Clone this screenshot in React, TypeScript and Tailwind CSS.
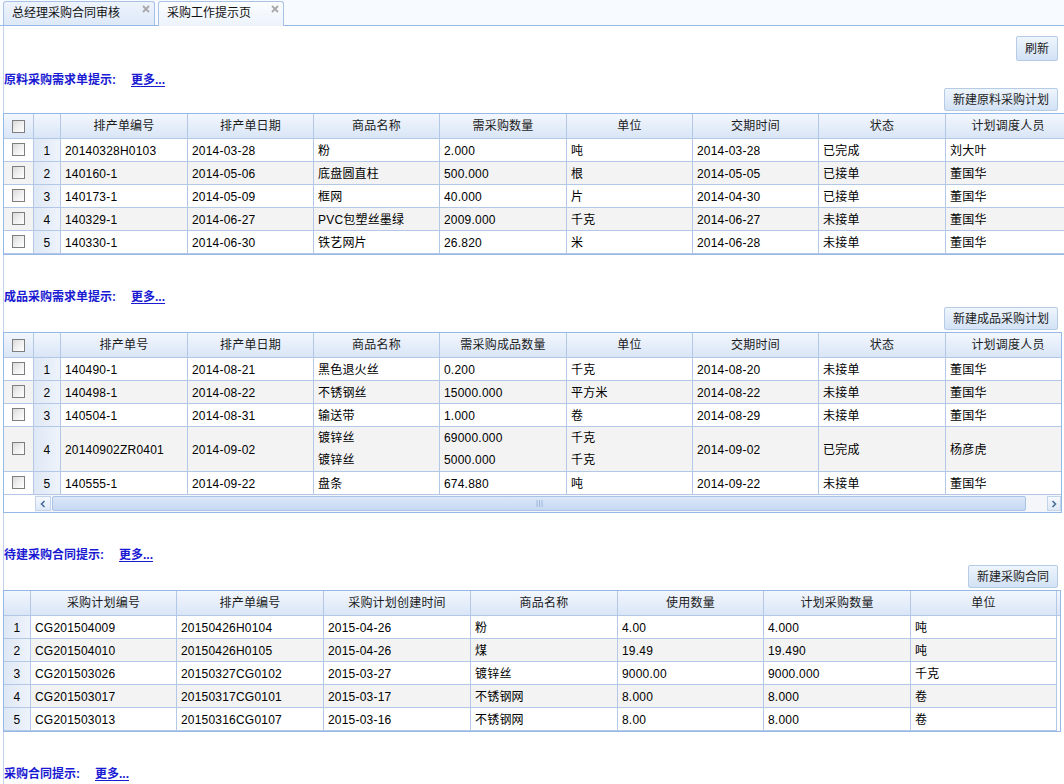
import React from "react";

type Col = { t: string; w: string };
type Cell = string | string[];
type Row = { cells: Cell[]; tall?: boolean };

const line = "border-[#b3c8e6]";

function CheckBox() {
  return (
    <span className="block w-[13px] h-[13px] border border-[#7e7e7e] bg-linear-to-br from-[#d9d9d9] via-[#f0f0f0] to-white" />
  );
}

function CloseX() {
  return (
    <svg className="absolute right-[4px] top-[3px]" width="8" height="8" viewBox="0 0 8 8">
      <path d="M1 1 L7 7 M7 1 L1 7" stroke="#a8a8a8" strokeWidth="1.8" />
    </svg>
  );
}

function Tab({ label, w, selected }: { label: string; w: string; selected?: boolean }) {
  return (
    <div
      className={
        "relative shrink-0 rounded-t-[3px] border border-b-0 border-[#a9c2e4] pl-[8px] text-[12px] leading-[22px] text-[#111] " +
        w +
        (selected
          ? " h-[25px] -mb-px bg-linear-to-b from-[#fbfdff] to-[#edf3fc]"
          : " h-[24px] bg-linear-to-b from-[#eef4fd] to-[#dde8f8]")
      }
    >
      {label}
      <CloseX />
    </div>
  );
}

function Btn({ label, h }: { label: string; h: string }) {
  return (
    <div
      className={
        "flex items-center justify-center px-[8px] rounded-[2px] border border-[#b6cbe6] bg-linear-to-b from-[#eef5fd] to-[#d2e2f5] text-[12px] text-[#222] " +
        h
      }
    >
      {label}
    </div>
  );
}

function Title({ label }: { label: string }) {
  return (
    <div className="mt-[33px] h-[18px] flex items-center text-[12px] font-bold text-[#1a1ad2] leading-[18px]">
      <span>{label}</span>
      <span className="ml-[15px] underline underline-offset-2">更多...</span>
    </div>
  );
}

function DataCell({ c, w }: { c: Cell; w: string }) {
  if (Array.isArray(c)) {
    return (
      <div className={"shrink-0 border-r " + line + " " + w + " flex flex-col justify-center pl-[4px] whitespace-nowrap overflow-hidden"}>
        {c.map((x, i) => (
          <div key={i} className="leading-[22px]">
            {x}
          </div>
        ))}
      </div>
    );
  }
  return (
    <div className={"shrink-0 border-r " + line + " " + w + " flex items-center pl-[4px] pt-px whitespace-nowrap overflow-hidden"}>
      {c}
    </div>
  );
}

function Grid({
  cols,
  rows,
  check,
  rnW,
  outerW,
  scrollbar,
}: {
  cols: Col[];
  rows: Row[];
  check: boolean;
  rnW: string;
  outerW: string;
  scrollbar?: boolean;
}) {
  return (
    <div className={"-ml-px mt-[2px] border border-[#95b8e7] overflow-hidden shrink-0 text-[12px] text-black tracking-[0.2px] " + outerW}>
      <div className={"flex h-[25px] border-b " + line + " bg-linear-to-b from-[#f3f7fe] to-[#d9e5f6] w-max min-w-full"}>
        {check && (
          <div className={"shrink-0 w-[30px] border-r " + line + " flex items-center justify-center"}>
            <CheckBox />
          </div>
        )}
        <div className={"shrink-0 border-r " + line + " " + rnW} />
        {cols.map((c, i) => (
          <div
            key={i}
            className={"shrink-0 border-r " + line + " " + c.w + " flex items-center justify-center text-[#1b1b1b] whitespace-nowrap"}
          >
            {c.t}
          </div>
        ))}
        <div className="flex-1" />
      </div>
      {rows.map((r, ri) => (
        <div
          key={ri}
          className={
            "flex border-b " + line + " w-max " + (r.tall ? "h-[45px]" : "h-[23px]") + (ri % 2 === 1 ? " bg-[#f3f3f3]" : " bg-white")
          }
        >
          {check && (
            <div className={"shrink-0 w-[30px] border-r " + line + " flex items-center justify-center pb-[2px]"}>
              <CheckBox />
            </div>
          )}
          <div className={"shrink-0 border-r " + line + " " + rnW + " flex items-center justify-center pt-px bg-linear-to-r from-[#dfe8f6] to-[#eef3fb]"}>
            {ri + 1}
          </div>
          {r.cells.map((c, ci) => (
            <DataCell key={ci} c={c} w={cols[ci].w} />
          ))}
        </div>
      ))}
      {scrollbar && (
        <div className="flex h-[17px] bg-white">
          <div className="w-[31px] shrink-0" />
          <div className="flex-1 flex items-stretch bg-[#f4f6f9] py-px">
            <div className="w-[16px] shrink-0 border border-[#c3d3ea] bg-linear-to-b from-[#f6f9fe] to-[#dde8f7] flex items-center justify-center">
              <svg width="6" height="8" viewBox="0 0 6 8">
                <path d="M4.5 1 L1.5 4 L4.5 7" fill="none" stroke="#4a6c9b" strokeWidth="1.6" />
              </svg>
            </div>
            <div className="w-[974px] shrink-0 ml-px rounded-[2px] border border-[#a9c3e6] bg-linear-to-b from-[#dbe7f8] to-[#c6d8f2] flex items-center justify-center">
              <svg width="7" height="7" viewBox="0 0 7 7">
                <path d="M1 0 V7 M3.5 0 V7 M6 0 V7" stroke="#9db6da" strokeWidth="1" />
              </svg>
            </div>
            <div className="flex-1" />
            <div className="w-[14px] shrink-0 border border-[#c3d3ea] bg-linear-to-b from-[#f6f9fe] to-[#dde8f7] flex items-center justify-center">
              <svg width="6" height="8" viewBox="0 0 6 8">
                <path d="M1.5 1 L4.5 4 L1.5 7" fill="none" stroke="#4a6c9b" strokeWidth="1.6" />
              </svg>
            </div>
          </div>
        </div>
      )}
    </div>
  );
}

const g1Cols: Col[] = [
  { t: "排产单编号", w: "w-[127px]" },
  { t: "排产单日期", w: "w-[126px]" },
  { t: "商品名称", w: "w-[126px]" },
  { t: "需采购数量", w: "w-[127px]" },
  { t: "单位", w: "w-[126px]" },
  { t: "交期时间", w: "w-[126px]" },
  { t: "状态", w: "w-[127px]" },
  { t: "计划调度人员", w: "w-[125px]" },
];

const g1Rows: Row[] = [
  { cells: ["20140328H0103", "2014-03-28", "粉", "2.000", "吨", "2014-03-28", "已完成", "刘大叶"] },
  { cells: ["140160-1", "2014-05-06", "底盘圆直柱", "500.000", "根", "2014-05-05", "已接单", "董国华"] },
  { cells: ["140173-1", "2014-05-09", "框网", "40.000", "片", "2014-04-30", "已接单", "董国华"] },
  { cells: ["140329-1", "2014-06-27", "PVC包塑丝墨绿", "2009.000", "千克", "2014-06-27", "未接单", "董国华"] },
  { cells: ["140330-1", "2014-06-30", "铁艺网片", "26.820", "米", "2014-06-28", "未接单", "董国华"] },
];

const g2Cols: Col[] = [
  { t: "排产单号", w: "w-[127px]" },
  { t: "排产单日期", w: "w-[126px]" },
  { t: "商品名称", w: "w-[126px]" },
  { t: "需采购成品数量", w: "w-[127px]" },
  { t: "单位", w: "w-[126px]" },
  { t: "交期时间", w: "w-[126px]" },
  { t: "状态", w: "w-[127px]" },
  { t: "计划调度人员", w: "w-[125px]" },
];

const g2Rows: Row[] = [
  { cells: ["140490-1", "2014-08-21", "黑色退火丝", "0.200", "千克", "2014-08-20", "未接单", "董国华"] },
  { cells: ["140498-1", "2014-08-22", "不锈钢丝", "15000.000", "平方米", "2014-08-22", "未接单", "董国华"] },
  { cells: ["140504-1", "2014-08-31", "输送带", "1.000", "卷", "2014-08-29", "未接单", "董国华"] },
  {
    tall: true,
    cells: ["20140902ZR0401", "2014-09-02", ["镀锌丝", "镀锌丝"], ["69000.000", "5000.000"], ["千克", "千克"], "2014-09-02", "已完成", "杨彦虎"],
  },
  { cells: ["140555-1", "2014-09-22", "盘条", "674.880", "吨", "2014-09-22", "未接单", "董国华"] },
];

const g3Cols: Col[] = [
  { t: "采购计划编号", w: "w-[146px]" },
  { t: "排产单编号", w: "w-[147px]" },
  { t: "采购计划创建时间", w: "w-[147px]" },
  { t: "商品名称", w: "w-[147px]" },
  { t: "使用数量", w: "w-[146px]" },
  { t: "计划采购数量", w: "w-[147px]" },
  { t: "单位", w: "w-[146px]" },
];

const g3Rows: Row[] = [
  { cells: ["CG201504009", "20150426H0104", "2015-04-26", "粉", "4.00", "4.000", "吨"] },
  { cells: ["CG201504010", "20150426H0105", "2015-04-26", "煤", "19.49", "19.490", "吨"] },
  { cells: ["CG201503026", "20150327CG0102", "2015-03-27", "镀锌丝", "9000.00", "9000.000", "千克"] },
  { cells: ["CG201503017", "20150317CG0101", "2015-03-17", "不锈钢网", "8.000", "8.000", "卷"] },
  { cells: ["CG201503013", "20150316CG0107", "2015-03-16", "不锈钢网", "8.00", "8.000", "卷"] },
];

export default function App() {
  return (
    <div className="w-[1064px] h-[784px] overflow-hidden bg-white flex flex-col font-['Liberation_Sans','Noto_Sans_CJK_SC',sans-serif]">
      <div className="h-[26px] shrink-0 border-b border-[#95b8e7] bg-[#f7faff] flex items-end pl-[3px] gap-[3px]">
        <Tab label="总经理采购合同审核" w="w-[152px]" />
        <Tab label="采购工作提示页" w="w-[126px]" selected />
      </div>
      <div className="flex-1 ml-[3px] border-l border-[#c2d4ec] flex flex-col">
        <div className="pt-[10px] pr-[6px] flex justify-end">
          <Btn label="刷新" h="h-[25px]" />
        </div>
        <div className="-mt-[23px]" />
        <Title label="原料采购需求单提示:" />
        <div className="-mt-px pr-[6px] flex justify-end">
          <Btn label="新建原料采购计划" h="h-[23px]" />
        </div>
        <Grid cols={g1Cols} rows={g1Rows} check rnW="w-[27px]" outerW="w-[1070px]" />

        <Title label="成品采购需求单提示:" />
        <div className="mt-px pr-[6px] flex justify-end">
          <Btn label="新建成品采购计划" h="h-[23px]" />
        </div>
        <Grid cols={g2Cols} rows={g2Rows} check rnW="w-[27px]" outerW="w-[1059px]" scrollbar />

        <Title label="待建采购合同提示:" />
        <div className="mt-px pr-[6px] flex justify-end">
          <Btn label="新建采购合同" h="h-[23px]" />
        </div>
        <Grid cols={g3Cols} rows={g3Rows} check={false} rnW="w-[27px]" outerW="w-[1058px]" />

        <Title label="采购合同提示:" />
      </div>
    </div>
  );
}
